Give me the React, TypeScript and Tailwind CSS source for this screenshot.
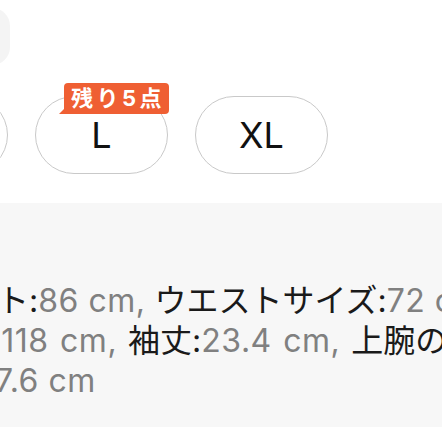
import React from 'react';

const sizes = ['M', 'L', 'XL'];

function SizePill({ label, badge }: { label: string; badge?: string }) {
  return (
    <div className="relative w-[133px] h-[78px] shrink-0 rounded-full border border-[#c9c9c9] bg-white flex items-center justify-center text-[36px] text-[#111111]">
      {label}
      {badge && (
        <div className="absolute left-[28px] top-[-14px] h-[31px] pl-[7px] pr-[4px] rounded-[4px] rounded-bl-none bg-[#ef5f33] text-white font-bold text-[22px] leading-[31px] tracking-[3.5px] whitespace-nowrap">
          {badge}
          <svg className="absolute left-[-5px] bottom-0" width="6" height="6" viewBox="0 0 6 6">
            <path d="M6 0 L6 6 L0 6 Z" fill="#ef5f33" />
          </svg>
        </div>
      )}
    </div>
  );
}

function Spec({ label, value, last }: { label: string; value: string; last?: boolean }) {
  return (
    <>
      <span className="text-[#1a1a1a]">{label}:</span>
      <span className="text-[#808080] tracking-[0.5px]">{value}{last ? '' : ','}</span>{' '}
    </>
  );
}

export default function App() {
  return (
    <div className="w-[442px] h-[442px] overflow-hidden bg-white font-['Inter','Noto_Sans_CJK_JP',sans-serif]">
      {/* previous control, mostly off screen */}
      <div className="h-[96px] pt-[8px]">
        <div className="ml-[-50px] w-[60px] h-[57px] rounded-[18px] bg-[#f4f4f4]" />
      </div>

      {/* size selector */}
      <div className="flex gap-[27px] ml-[-125px]">
        {sizes.map((s) => (
          <SizePill key={s} label={s} badge={s === 'L' ? '残り5点' : undefined} />
        ))}
      </div>

      {/* measurements */}
      <div className="mt-[29px] h-[224px] bg-[#f7f7f7] pt-[78px] text-[32px] leading-[40px]">
        <div className="h-[40px] whitespace-nowrap ml-[-67px]">
          <Spec label="バスト" value="86 cm" />
          <Spec label="ウエストサイズ" value="72 cm" />
        </div>
        <div className="h-[40px] whitespace-nowrap ml-[-72px] [word-spacing:2px]">
          <Spec label="着丈" value="118 cm" />
          <Spec label="袖丈" value="23.4 cm" />
          <Spec label="上腕の周り" value="" last />
        </div>
        <div className="h-[40px] whitespace-nowrap ml-[-25px] text-[#808080] tracking-[0.5px]">27.6 cm</div>
      </div>
    </div>
  );
}
